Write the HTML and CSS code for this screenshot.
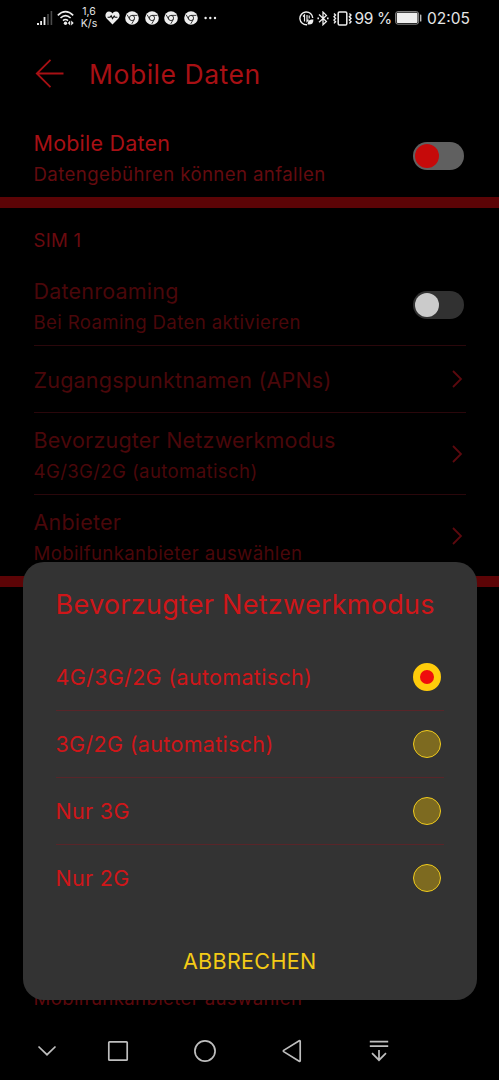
FILE: index.html
```html
<!DOCTYPE html>
<html lang="de">
<head>
<meta charset="utf-8">
<title>Mobile Daten</title>
<link rel="stylesheet" href="styles.css">
</head>
<body>
<svg width="0" height="0" class="defs">
  <symbol id="chrome" viewBox="0 0 14 14">
    <circle cx="7" cy="7" r="6.8" fill="#eee"/>
    <circle cx="7" cy="7" r="2.6" fill="#eee" stroke="#222" stroke-width=".9"/>
    <path d="M7 4.4H12.4M4.7 8.3L2.2 3.8M9.3 8.4L6.8 12.8" stroke="#222" stroke-width=".9" fill="none"/>
  </symbol>
  <symbol id="chevron" viewBox="0 0 12 20"><path d="M2 2L10 10L2 18" fill="none" stroke="currentColor" stroke-width="1.8"/></symbol>
</svg>
<div class="phone">
  <header class="status">
    <div class="status-left">
      <svg class="signal" width="16" height="15" viewBox="0 0 16 15"><g fill="#eee"><rect x="0" y="12" width="2" height="2"/><rect x="3.2" y="10" width="1.8" height="4"/><rect x="6.6" y="6" width="1.8" height="8"/></g><g fill="#4a4a4a"><rect x="10.2" y="3" width="1.6" height="11"/><rect x="13.6" y="0" width="1.6" height="14"/></g></svg>
      <svg class="wifi" width="18" height="16" viewBox="0 0 18 16"><path d="M.8 5.3Q8.5-2 16.2 5.3M3.5 8Q8.5 3.2 13.6 8M6 10.7Q8.5 8.3 11 10.7" fill="none" stroke="#eee" stroke-width="1.6"/><circle cx="8.5" cy="13.2" r="1.7" fill="#eee"/><path d="M13.2 10.5L10.8 13L13.2 15.5zM14.2 10.5L16.7 13L14.2 15.5z" fill="#eee"/></svg>
      <div class="speed"><span>1,6</span><span>K/s</span></div>
      <svg class="heart" width="15" height="14" viewBox="0 0 15 14"><path d="M7.5 13.5L1.6 7.6C-.8 4.8.7.6 4 .6C5.7.6 6.8 1.5 7.5 2.6C8.2 1.5 9.3.6 11 .6C14.3.6 15.8 4.8 13.4 7.6Z" fill="#eee"/><path d="M2.6 6.2H5L6.2 4.8L7.5 7.6L9.2 5L10 6.2H12.4" fill="none" stroke="#111" stroke-width="1.1"/></svg>
      <svg class="app" width="14" height="14"><use href="#chrome"/></svg>
      <svg class="app" width="14" height="14"><use href="#chrome"/></svg>
      <svg class="app" width="14" height="14"><use href="#chrome"/></svg>
      <svg class="app" width="14" height="14"><use href="#chrome"/></svg>
      <svg class="more" width="13" height="4" viewBox="0 0 13 4"><g fill="#eee"><circle cx="1.6" cy="2" r="1.2"/><circle cx="6.3" cy="2" r="1.2"/><circle cx="11" cy="2" r="1.2"/></g></svg>
    </div>
    <div class="status-right">
      <svg class="saver" width="15" height="15" viewBox="0 0 15 15"><path d="M13.7 7A6.4 6.4 0 1 0 8 13.7" fill="none" stroke="#eee" stroke-width="1.4"/><path d="M4 5.5L5.5 4V10.5M8 4V10.3L9.6 8.8M10.2 4.5V7.5" fill="none" stroke="#eee" stroke-width="1.2"/><path d="M8.6 13.5C8.5 9.6 10.5 8.3 14.4 8.4C14.5 12.4 12.6 14 8.6 13.5Z" fill="#eee"/></svg>
      <svg class="bluetooth" width="12" height="15" viewBox="0 0 12 15"><path d="M2 3.6L9.4 10.4L6 13.7V1.1L9.4 4.4L2 11.2" fill="none" stroke="#eee" stroke-width="1.3"/><path d="M.4 7.4H2M10 7.4H11.6" stroke="#eee" stroke-width="1.6"/></svg>
      <svg class="vibrate" width="19" height="15" viewBox="0 0 19 15"><rect x="5.2" y="1" width="8.6" height="13" rx="1.3" fill="none" stroke="#eee" stroke-width="1.5"/><path d="M1 2.5L2.5 4L1 5.7L2.5 7.4L1 9L2.5 10.7L1 12.4M16.4 2.5L18 4L16.4 5.7L18 7.4L16.4 9L18 10.7L16.4 12.4" fill="none" stroke="#eee" stroke-width="1.4"/></svg>
      <span class="percent">99 %</span>
      <svg class="battery" width="27" height="14" viewBox="0 0 27 14"><rect x=".6" y=".6" width="23" height="12.6" rx="2.4" fill="none" stroke="#999" stroke-width=".9"/><rect x="1.8" y="1.8" width="20.7" height="10.2" rx="1" fill="#eee"/><rect x="25" y="3.5" width="1.4" height="7" rx=".5" fill="#bbb"/></svg>
      <span class="clock">02:05</span>
    </div>
  </header>

  <div class="appbar">
    <svg width="30" height="30" viewBox="0 0 30 30"><path d="M28.5 14.5H1.8M15.5 .8L1.8 14.5L15.5 28.2" fill="none" stroke="currentColor" stroke-width="1.8"/></svg>
    <h1>Mobile Daten</h1>
  </div>

  <main>
    <section class="row row-main">
      <div class="text"><div class="name">Mobile Daten</div><div class="sub">Datengebühren können anfallen</div></div>
      <div class="toggle toggle-main"></div>
    </section>
    <section class="group">
      <h2>SIM 1</h2>
      <div class="row row-roaming">
        <div class="text"><div class="name">Datenroaming</div><div class="sub">Bei Roaming Daten aktivieren</div></div>
        <div class="toggle"></div>
      </div>
      <div class="row row-apn">
        <div class="text"><div class="name">Zugangspunktnamen (APNs)</div></div>
        <svg class="chev" width="12" height="20"><use href="#chevron"/></svg>
      </div>
      <div class="row row-mode">
        <div class="text"><div class="name">Bevorzugter Netzwerkmodus</div><div class="sub">4G/3G/2G (automatisch)</div></div>
        <svg class="chev" width="12" height="20"><use href="#chevron"/></svg>
      </div>
      <div class="row row-carrier">
        <div class="text"><div class="name">Anbieter</div><div class="sub">Mobilfunkanbieter auswählen</div></div>
        <svg class="chev" width="12" height="20"><use href="#chevron"/></svg>
      </div>
    </section>
    <section class="group group-second">
      <div class="sub">Mobilfunkanbieter auswählen</div>
    </section>
  </main>

  <nav class="navbar">
    <svg width="20" height="12" viewBox="0 0 20 12"><path d="M1.5 1.5L10 9.7L18.5 1.5"/></svg>
    <svg width="22" height="22" viewBox="0 0 22 22"><rect x="1.8" y="1.8" width="18.4" height="18.4" rx=".8"/></svg>
    <svg width="24" height="24" viewBox="0 0 24 24"><circle cx="12" cy="12" r="10.1"/></svg>
    <svg width="20" height="24" viewBox="0 0 20 24"><path d="M18.2 2.3V21.7Q18.2 22.7 17.2 22.2L1.7 12.6Q1 12 1.7 11.4L17.2 1.8Q18.2 1.3 18.2 2.3Z"/></svg>
    <svg width="20" height="24" viewBox="0 0 20 24"><path d="M.8 2.6H19.2M.8 7.2H19.2M10 11V21.3M3 14.2L10 21.2L17 14.2"/></svg>
  </nav>

  <div class="dialog">
    <h3>Bevorzugter Netzwerkmodus</h3>
    <ul>
      <li><span>4G/3G/2G (automatisch)</span><i class="radio checked"></i></li>
      <li><span>3G/2G (automatisch)</span><i class="radio"></i></li>
      <li><span>Nur 3G</span><i class="radio"></i></li>
      <li><span>Nur 2G</span><i class="radio"></i></li>
    </ul>
    <div class="cancel">ABBRECHEN</div>
  </div>
</div>
</body>
</html>
```
FILE: styles.css
```css
* { box-sizing: border-box; margin: 0; padding: 0; }
html, body { background: #000; }
body { font-family: Inter, "Liberation Sans", sans-serif; }
svg { display: block; flex: none; }
.defs { position: absolute; }
.phone { position: relative; width: 499px; height: 1080px; overflow: hidden; background: #000; display: flex; flex-direction: column; }

.status { height: 36px; flex: none; display: flex; justify-content: space-between; align-items: center; padding: 0 29px 0 37px; color: #e6e6e6; }
.status-left, .status-right { display: flex; align-items: center; }
.wifi { margin-left: 3.5px; }
.speed { display: flex; flex-direction: column; width: 18px; margin-left: 5.5px; text-align: center; font-size: 10.5px; line-height: 12px; }
.heart { margin: 0 5px 0 7px; }
.app { margin-right: 5.5px; }
.more { margin-left: .5px; }
.bluetooth { margin: 0 3.5px; }
.percent { font-size: 15.5px; letter-spacing: -.4px; margin-left: 3px; white-space: nowrap; }
.battery { margin: 0 5px 0 3.3px; }
.clock { font-size: 15.5px; }

.appbar { height: 76px; flex: none; display: flex; align-items: center; gap: 24px; padding-left: 35px; color: #a81014; }
h1 { font-size: 26.5px; font-weight: 400; line-height: 36px; letter-spacing: .02em; }

.row { display: flex; justify-content: space-between; align-items: flex-start; margin: 0 33px 0 33.5px; border-bottom: 1px solid #2a070b; color: #4a070a; }
.name { font-size: 21.5px; line-height: 31px; letter-spacing: .01em; white-space: nowrap; }
.sub { font-size: 18.6px; line-height: 31px; letter-spacing: .02em; white-space: nowrap; }
.row-main { height: 85px; padding-top: 15.7px; border: 0; color: #a81015; }
.row-main .sub { color: #640b0f; letter-spacing: .022em; }
.toggle { width: 51px; height: 28px; border-radius: 14px; background: #313131; margin: 15px 2px 0 0; padding: 2px; }
.toggle::before { content: ""; display: block; width: 24px; height: 24px; border-radius: 50%; background: #cbcbcb; }
.toggle-main { background: #606060; margin-top: 14.5px; }
.toggle-main::before { background: #c60a0a; }
.group { border-top: 11px solid #5c0406; }
h2 { font-size: 18.6px; font-weight: 400; line-height: 65px; height: 64px; padding-left: 33.5px; letter-spacing: .015em; color: #690a0f; }
.row-roaming { height: 74px; padding-top: 3.7px; }
.row-apn { height: 67px; padding-top: 18.5px; }
.row-mode { height: 82px; padding-top: 11.5px; }
.row-carrier { height: 81px; padding-top: 11.5px; border: 0; }
.chev { margin: 19px 2.7px 0 0; color: #5c090e; }
.row-apn .chev { margin-top: 4.7px; }
.group-second { height: 440px; padding: 396px 33.5px 0; color: #5c080c; }

.navbar { position: absolute; left: 0; bottom: 0; width: 499px; height: 59px; background: #000; display: flex; align-items: center; padding-left: 37px; }
.navbar svg { fill: none; stroke: #bebebe; stroke-width: 1.7; }
.navbar svg:nth-child(2) { margin-left: 50px; }
.navbar svg:nth-child(3) { margin-left: 64px; }
.navbar svg:nth-child(4) { margin-left: 65px; }
.navbar svg:nth-child(5) { margin-left: 67.3px; }

.dialog { position: absolute; left: 22.5px; top: 562px; width: 454.5px; height: 437.5px; border-radius: 21px; background: #333; padding: 25px 33px 0; color: #cf1619; }
h3 { font-size: 27px; font-weight: 400; line-height: 36px; height: 57px; letter-spacing: .01em; white-space: nowrap; }
ul { list-style: none; }
li { height: 67px; display: flex; align-items: center; justify-content: space-between; padding-right: 3px; border-bottom: 1px solid #592529; font-size: 21.5px; letter-spacing: .015em; }
li:last-child { border-color: transparent; }
.radio { width: 28px; height: 28px; border-radius: 50%; background: #7d6a20; border: 1.5px solid #f0cb1c; }
.radio.checked { background: #ef0d0d; border: 7px solid #ffcc0b; }
.cancel { margin-top: 31px; line-height: 36px; text-align: center; font-size: 21.5px; letter-spacing: .016em; color: #f4cb16; }
```
